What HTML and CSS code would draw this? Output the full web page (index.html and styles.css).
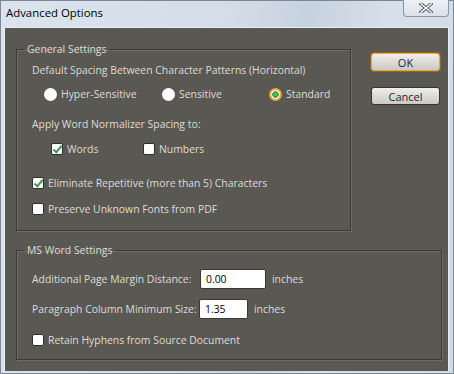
FILE: index.html
```html
<!DOCTYPE html>
<html lang="en">
<head>
    <meta charset="UTF-8">
    <title>Advanced Options</title>
    <link rel="stylesheet" href="styles.css">
</head>
<body>
    <div class="window">
        <div class="titlebar">
            <span class="title">Advanced Options</span>
            <button class="close" type="button">
                <svg width="14" height="10" viewBox="0 0 14 10">
                    <path d="M2 1 L12 9 M12 1 L2 9" stroke="#4a5261" stroke-width="3.4" stroke-linecap="square"/>
                    <path d="M2 1 L12 9 M12 1 L2 9" stroke="#fff" stroke-width="1.6" stroke-linecap="square"/>
                </svg>
            </button>
        </div>

        <div class="client">
            <div class="top">
                <fieldset class="group general">
                    <legend>General Settings</legend>
                    <div class="row r-a">Default Spacing Between Character Patterns (Horizontal)</div>
                    <div class="row r-b radios">
                        <label class="opt w-hyper"><span class="radio"></span>Hyper-Sensitive</label>
                        <label class="opt w-sens"><span class="radio"></span>Sensitive</label>
                        <label class="opt"><span class="radio on"></span>Standard</label>
                    </div>
                    <div class="row r-c">Apply Word Normalizer Spacing to:</div>
                    <div class="row r-d checks">
                        <label class="opt w-words"><span class="check on"></span>Words</label>
                        <label class="opt"><span class="check"></span>Numbers</label>
                    </div>
                    <div class="row r-e"><label class="opt"><span class="check on"></span>Eliminate Repetitive (more than 5) Characters</label></div>
                    <div class="row r-f"><label class="opt"><span class="check"></span>Preserve Unknown Fonts from PDF</label></div>
                </fieldset>

                <div class="buttons">
                    <button class="btn default" type="button">OK</button>
                    <button class="btn" type="button">Cancel</button>
                </div>
            </div>

            <fieldset class="group word">
                <legend>MS Word Settings</legend>
                <div class="row r-1">
                    <span class="lbl w-margin">Additional Page Margin Distance:</span>
                    <input class="field f-margin" type="text" value="0.00">
                    <span>inches</span>
                </div>
                <div class="row r-2">
                    <span class="lbl w-col">Paragraph Column Minimum Size:</span>
                    <input class="field f-col" type="text" value="1.35">
                    <span>inches</span>
                </div>
                <div class="row r-3"><label class="opt"><span class="check"></span>Retain Hyphens from Source Document</label></div>
            </fieldset>
        </div>
    </div>
</body>
</html>
```

FILE: styles.css
```css
html, body {
    margin: 0;
    padding: 0;
}

body {
    width: 454px;
    height: 374px;
    overflow: hidden;
    font-family: "Open Sans", "DejaVu Sans", sans-serif;
    font-size: 10.4px;
    white-space: nowrap;
}

.window {
    width: 454px;
    height: 374px;
    box-sizing: border-box;
    background: linear-gradient(100deg, #dbe4ee 0%, #d3dde8 45%, #c6d2de 60%, #d6e0ea 75%, #cfdbe6 100%);
    border: 1px solid #7b8796;
    display: flex;
    flex-direction: column;
}

.titlebar {
    height: 26px;
    display: flex;
    align-items: flex-start;
    justify-content: space-between;
}

.title {
    margin: 4px 0 0 5px;
    font-family: "Open Sans", sans-serif;
    font-size: 11.4px;
    color: #000;
}

.close {
    width: 46px;
    height: 17px;
    margin: -1px 4px 0 0;
    padding: 0;
    border: 1px solid #8996a6;
    border-top: none;
    border-radius: 0 0 4px 4px;
    background: linear-gradient(#eef2f6, #d8e0ea);
    display: flex;
    align-items: center;
    justify-content: center;
}

.client {
    margin: 0 4px 0 3px;
    height: 343px;
    background: #5a5853;
    border: 1px solid #e9eef3;
    border-bottom: none;
    color: #dedcd4;
    padding: 0 0 0 11px;
}

.top {
    display: flex;
    margin-top: 14px;
}

.group {
    margin: 0;
    padding: 0 0 0 15px;
    border: 1px solid #3a3935;
    box-shadow: 1px 1px 0 #6d6b66, inset 1px 1px 0 #6d6b66;
}

.group legend {
    margin-left: -8px;
    padding: 0 3px;
    line-height: 14px;
}

.general {
    width: 335px;
    box-sizing: border-box;
    padding-bottom: 11px;
}

.word {
    width: 426px;
    box-sizing: border-box;
    margin-top: 12px;
    padding-bottom: 9px;
}

.row {
    height: 20px;
    display: flex;
    align-items: center;
}

.r-a { margin-top: 4px; }
.r-b { margin-top: 4px; padding-left: 12px; }
.r-c { margin-top: 10px; }
.r-d { margin-top: 5px; padding-left: 19px; }
.r-e { margin-top: 14px; }
.r-f { margin-top: 6px; }

.r-1 { margin-top: 12px; }
.r-2 { margin-top: 10px; }
.r-3 { margin-top: 11px; }

.opt {
    display: flex;
    align-items: center;
}

.w-hyper { width: 118px; }
.w-sens { width: 107px; }
.w-words { width: 92px; }

.radio {
    width: 13px;
    height: 13px;
    border-radius: 50%;
    background: #fff;
    margin-right: 4px;
    box-sizing: border-box;
}

.radio.on {
    border: 2px solid #f0a332;
    background: radial-gradient(circle, #5fd07a 0, #2a9a44 3px, #fff 3.5px);
}

.check {
    width: 12px;
    height: 12px;
    box-sizing: border-box;
    background: #fff;
    border: 1px solid #2f2e2b;
    border-radius: 2px;
    margin-right: 4px;
    position: relative;
}

.check.on::after {
    content: "";
    position: absolute;
    left: 3px;
    top: 0;
    width: 3px;
    height: 7px;
    border: solid #3c9a4c;
    border-width: 0 2px 2px 0;
    transform: rotate(40deg);
}

.lbl.w-margin { width: 168px; }
.lbl.w-col { width: 167px; }

.field {
    height: 20px;
    box-sizing: border-box;
    border: 1px solid #3a3935;
    border-radius: 2px;
    background: #fff;
    color: #000;
    font-family: inherit;
    font-size: 10.4px;
    padding: 0 5px;
    margin-right: 6px;
}

.f-margin { width: 66px; }
.f-col { width: 49px; }

.buttons {
    margin-left: 20px;
    margin-top: 11px;
    display: flex;
    flex-direction: column;
    gap: 16px;
}

.btn {
    width: 69px;
    height: 18px;
    padding: 0;
    font-family: inherit;
    font-size: 11px;
    color: #1d2740;
    border: 1px solid #34332f;
    border-radius: 3px;
    background: linear-gradient(#f0efeb, #dcdbd6 50%, #cac9c3);
}

.btn.default {
    border-color: #f2a33a;
    box-shadow: 0 0 0 1px #8a6a30;
}
```
